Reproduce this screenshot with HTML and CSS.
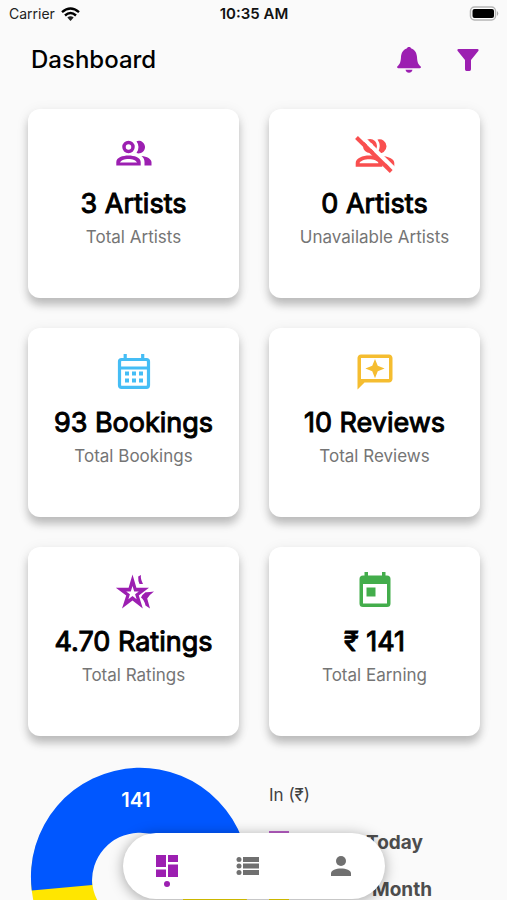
FILE: index.html
```html
<!DOCTYPE html>
<html lang="en">
<head>
<meta charset="utf-8">
<meta name="viewport" content="width=device-width, initial-scale=1">
<title>Dashboard</title>
<link rel="stylesheet" href="styles.css">
</head>
<body>
<div class="screen">
  <div class="status">
    <div class="status-left">
      <span>Carrier</span>
      <svg width="19" height="14" viewBox="0 0 19 14" aria-hidden="true"><g fill="none" stroke="#000" stroke-width="2.4"><path d="M1 5.2Q9.500-2 18 5.200"/><path d="M4 8.500Q9.500 3.600 15 8.500"/></g><path d="M6.300 10.600Q9.500 7.900 12.700 10.600L9.500 14z"/></svg>
    </div>
    <time class="status-time">10:35 AM</time>
    <div class="status-right">
      <svg width="31" height="15" viewBox="0 0 31 15" aria-hidden="true"><rect x="2.500" y="1" width="25" height="13" rx="4" fill="#fff" stroke="#b5b5b5" stroke-width="1.500"/><rect x="4.500" y="3" width="21.500" height="9" rx="2" fill="#000"/><path d="M29 5Q31.500 7.500 29 10z" fill="#aaa"/></svg>
    </div>
  </div>

  <header class="header">
    <h1>Dashboard</h1>
    <div class="actions">
      <button class="icon-button" type="button" aria-label="Notifications">
        <svg width="24" height="26" viewBox="0 0 24 26"><path d="M12 0c-1.200 0-2 .6-2.300 1.500C6 2.700 4.300 6 4 10c-.3 5-1 7-3.500 9.300-.8.900-.4 1.900.7 1.900h21.600c1.100 0 1.500-1 .7-1.900C21 17 20.300 15 20 10c-.3-4-2-7.300-5.700-8.500C14 .6 13.200 0 12 0zM8.500 22.800h7c-.4 1.900-1.800 3-3.500 3s-3.100-1.100-3.500-3z"/></svg>
      </button>
      <button class="icon-button" type="button" aria-label="Filter">
        <svg width="22" height="22" viewBox="0 0 22 22"><path d="M1.500 0h19c1.100 0 1.500 1.200.8 2L14 11v9c0 1.200-.6 2-1.500 2h-3C8.600 22 8 21.200 8 20v-9L.7 2C0 1.200.4 0 1.500 0z"/></svg>
      </button>
    </div>
  </header>

  <main class="content">
    <section class="cards">
      <article class="card">
        <svg class="card-icon purple" viewBox="0 0 42 42"><circle cx="15.500" cy="15" r="4.500" fill="none" stroke="currentColor" stroke-width="3.500"/><path d="M23.500 9.200a6.300 6.300 0 1 1 0 11.800q4-6 0-11.800z"/><path fill-rule="evenodd" d="M3.300 33.500V30c0-4.500 6.500-6.500 12.200-6.500S27.700 25.500 27.700 30v3.500zM7 30.600h17c-.5-2.200-4.500-3.700-8.500-3.700S7.500 28.400 7 30.600z"/><path d="M28.500 24c5.500.7 10 2.800 10 6.200v3.300h-7V30c0-2.600-1.200-4.500-3-6z"/></svg>
        <h2>3 Artists</h2>
        <p>Total Artists</p>
      </article>
      <article class="card">
        <svg class="card-icon red" viewBox="0 0 42 42"><circle cx="16" cy="14" r="5" fill="none" stroke="currentColor" stroke-width="4"/><path d="M23.500 7.600a7 7 0 1 1 0 13.400q4.500-7 0-13.400z"/><path fill-rule="evenodd" d="M1.700 34.700V31c0-5 7-7.500 13.500-7.500S28.300 26 28.300 31v3.700zM5.500 31.200h19c-.5-2.500-5-4-9.300-4s-9 1.500-9.700 4z"/><path d="M28 24c7 .7 12.300 3 12.300 7v3.700H32V31c0-2.800-1.800-5-4-7z"/><path d="M5 2l36 35.500" stroke="#fff" stroke-width="4"/><path d="M2.500 5.500l34.700 34" stroke="currentColor" stroke-width="4"/></svg>
        <h2>0 Artists</h2>
        <p>Unavailable Artists</p>
      </article>
      <article class="card">
        <svg class="card-icon blue" viewBox="0 0 42 42"><path d="M8.500 8.500h25q2 0 2 2v23.800q0 2-2 2h-25q-2 0-2-2V10.500q0-2 2-2zM6.500 17h29M12.200 3v6M29.700 3v6" fill="none" stroke="currentColor" stroke-width="3.200"/><path d="M12 20.500h4v4h-4zm7 0h4v4h-4zm7 0h4v4h-4zM12 27.500h4v4h-4zm7 0h4v4h-4zm7 0h4v4h-4z"/></svg>
        <h2>93 Bookings</h2>
        <p>Total Bookings</p>
      </article>
      <article class="card">
        <svg class="card-icon amber" viewBox="0 0 24 24"><path d="M20 2H4c-1.100 0-2 .9-2 2v18l4-4h14c1.100 0 2-.9 2-2V4c0-1.100-.9-2-2-2zm0 14H4V4h16v12z"/><path d="M12 15.500l1.570-3.930L17.500 10l-3.930-1.570L12 4.500l-1.570 3.930L6.500 10l3.930 1.570z"/></svg>
        <h2>10 Reviews</h2>
        <p>Total Reviews</p>
      </article>
      <article class="card">
        <svg class="card-icon purple" viewBox="0 0 42 42"><path fill-rule="evenodd" d="M19.500 4.500l3.900 13.300H36L25.800 25.500 29.800 38.500 19.500 30.500 9 38.500l4.200-13L2.800 17.800h12.800zM19.500 16l-1.700 5.400h-4.600l3.700 2.800-1.500 5 4.100-3.200 4.100 3.200-1.500-5 3.700-2.800h-4.600z"/><path d="M25.200 6.500l2.800-1.500q-.8 3.500 2 9h-3.500q-1.500-2.500-1.300-7.500z"/><path d="M41 21.500q-5.500 1-8.500.8-3 2-4.500 5.200 3 1.800 4.500 8l4.500 3-2.800-10q2.500-4 6.800-7z"/></svg>
        <h2>4.70 Ratings</h2>
        <p>Total Ratings</p>
      </article>
      <article class="card">
        <svg class="card-icon green" viewBox="0 0 42 42"><path fill-rule="evenodd" d="M10.500 2H14v3.500h14V2h3.500v3.500H33q3.500 0 3.500 3.500v24.500q0 3.500-3.500 3.500H9q-3.500 0-3.500-3.500V9q0-3.500 3.500-3.500h1.500zM9 14v19.500h24V14z"/><path d="M12.500 17.500h9v9h-9z"/></svg>
        <h2>₹ 141</h2>
        <p>Total Earning</p>
      </article>
    </section>

    <section class="earnings">
      <svg class="donut" viewBox="0 0 218 218" role="img" aria-label="Earnings">
        <circle cx="109" cy="109" r="78.500" fill="none" stroke="#ffe600" stroke-width="61"/>
        <path d="M.8 121.500A109 109 0 1 1 217.700 115L157 112A48 48 0 1 0 61.200 116z" fill="#0057ff"/>
        <text x="105" y="38" text-anchor="middle">141</text>
      </svg>
      <div class="legend">
        <p>In (₹)</p>
        <ul>
          <li><span class="swatch violet"></span><span class="label today">Today</span></li>
          <li><span class="swatch yellow"></span><span class="label month">Month</span></li>
        </ul>
      </div>
    </section>
  </main>

  <nav class="tabs" aria-label="Main">
    <a class="tab active" href="#dashboard" aria-label="Dashboard"><svg width="24" height="24" viewBox="0 0 24 24"><path d="M1 1h10v12H1zM13 1h10v7H13zM13 10.500h10V23H13zM1 15.500h10V23H1z"/></svg></a>
    <a class="tab list" href="#list" aria-label="Bookings"><svg width="24" height="24" viewBox="0 0 24 24"><path d="M7 3h16v5H7zM7 9.500h16v5H7zM7 16h16v5H7z"/><circle cx="3" cy="5.500" r="2.500"/><circle cx="3" cy="12" r="2.500"/><circle cx="3" cy="18.500" r="2.500"/></svg></a>
    <a class="tab" href="#profile" aria-label="Profile"><svg width="24" height="24" viewBox="0 0 24 24"><circle cx="12" cy="7" r="5"/><path d="M2 22v-2.500c0-3.300 5-5 10-5s10 1.700 10 5V22z"/></svg></a>
  </nav>
</div>
</body>
</html>
```
FILE: styles.css
```css
* { box-sizing: border-box; }

body {
  margin: 0;
  background: #fafafa;
  color: #000;
  font-family: Inter, "Liberation Sans", sans-serif;
}

h1, h2, p, ul { margin: 0; padding: 0; }

.screen {
  position: relative;
  display: flex;
  flex-direction: column;
  height: 100vh;
  overflow: hidden;
}

.status {
  display: grid;
  grid-template-columns: 1fr auto 1fr;
  align-items: center;
  flex: none;
  height: 27px;
  padding: 0 8px 0 9px;
  font-size: 14px;
  color: #222;
}

.status-left { display: flex; align-items: center; gap: 6px; }
.status-time { font-size: 15px; font-weight: 600; line-height: 18px; color: #111; }
.status-right { display: flex; justify-content: flex-end; }

.header {
  display: flex;
  align-items: center;
  justify-content: space-between;
  flex: none;
  height: 65px;
  padding: 0 28px 0 31px;
}

h1 { font-size: 24px; font-weight: 500; }

.actions { display: flex; align-items: center; gap: 36px; }

.icon-button {
  display: flex;
  padding: 0;
  border: 0;
  background: none;
  color: #9c1fb1;
}

svg { fill: currentColor; }

.content {
  flex: 1;
  min-height: 0;
  padding: 17px 27px 0 28px;
  overflow-y: auto;
  scrollbar-width: none;
}

.cards {
  display: grid;
  grid-template-columns: 1fr 1fr;
  gap: 30px;
}

.card {
  display: flex;
  flex-direction: column;
  align-items: center;
  height: 189px;
  padding-top: 23px;
  border-radius: 12px;
  background: #fff;
  box-shadow: 0 7px 9px rgba(0, 0, 0, 0.22), 0 2px 14px rgba(0, 0, 0, 0.07);
}

.card-icon { width: 42px; height: 42px; }
.purple { color: #9c1fb1; }
.red { color: #f94f4f; }
.blue { color: #45bdf5; }
.amber { color: #f5bd30; }
.green { color: #43ad4b; }

h2 {
  margin-top: 12px;
  font-size: 27px;
  font-weight: 400;
  line-height: 36px;
  -webkit-text-stroke: 1px;
}

.card p {
  margin-top: 3px;
  font-size: 17px;
  line-height: 24px;
  color: #757575;
}

.earnings {
  display: grid;
  grid-template-columns: minmax(0, 1fr) minmax(0, 1fr);
  column-gap: 30px;
  padding-top: 33px;
}

.donut { width: 218px; height: 218px; margin-left: 3px; overflow: visible; }
.donut text { fill: #fff; font-size: 20px; font-weight: 600; }

.legend { padding-top: 14px; color: #424242; }
.legend p { font-size: 17px; line-height: 24px; }

.legend ul { margin-top: 22px; list-style: none; }

.legend li {
  display: flex;
  align-items: center;
  height: 28px;
  margin-bottom: 19px;
}

.swatch { width: 20px; height: 24px; }
.violet { background: #ba5fc7; }
.yellow { background: #ffe600; }

.label {
  font-size: 19px;
  font-weight: 700;
  line-height: 20px;
  color: #4d4d4d;
}

.today { margin-left: 77px; }
.month { margin-left: 83px; }

.tabs {
  position: absolute;
  bottom: 1px;
  left: 50%;
  display: flex;
  align-items: center;
  justify-content: space-between;
  width: 262px;
  height: 66px;
  padding: 0 32px;
  border-radius: 33px;
  background: #fff;
  box-shadow: 0 2px 14px rgba(0, 0, 0, 0.35);
  transform: translateX(-50%);
}

.tab { position: relative; display: flex; color: #707070; }
.tab.list { margin-right: 12px; }
.tab.active { color: #9c1fb1; }

.tab.active::after {
  content: "";
  position: absolute;
  top: 27px;
  left: 9px;
  width: 6px;
  height: 6px;
  border-radius: 50%;
  background: currentColor;
}
```
